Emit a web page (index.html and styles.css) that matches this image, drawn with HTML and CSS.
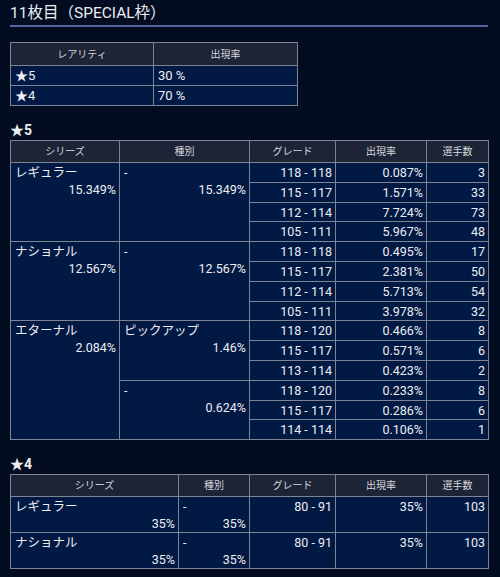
FILE: index.html
```html
<!DOCTYPE html>
<html lang="ja">
<head>
<meta charset="utf-8">
<link rel="stylesheet" href="styles.css">
</head>
<body>
<div class="page">
  <h2 class="title">11枚目（SPECIAL枠）</h2>

  <table class="tbl rarity">
    <colgroup><col class="c-r1"><col class="c-r2"></colgroup>
    <thead><tr><th>レアリティ</th><th>出現率</th></tr></thead>
    <tbody>
      <tr><td>★5</td><td>30 %</td></tr>
      <tr><td>★4</td><td>70 %</td></tr>
    </tbody>
  </table>

  <h3 class="rank">★5</h3>
  <table class="tbl detail">
    <colgroup><col class="c5-a"><col class="c5-b"><col class="c-g"><col class="c-p"><col class="c-n"></colgroup>
    <thead><tr><th>シリーズ</th><th>種別</th><th>グレード</th><th>出現率</th><th>選手数</th></tr></thead>
    <tbody>
      <tr>
        <td rowspan="4" class="grp"><div>レギュラー</div><div class="r">15.349%</div></td>
        <td rowspan="4" class="grp"><div>-</div><div class="r">15.349%</div></td>
        <td class="r">118 - 118</td><td class="r">0.087%</td><td class="r">3</td>
      </tr>
      <tr><td class="r">115 - 117</td><td class="r">1.571%</td><td class="r">33</td></tr>
      <tr><td class="r">112 - 114</td><td class="r">7.724%</td><td class="r">73</td></tr>
      <tr><td class="r">105 - 111</td><td class="r">5.967%</td><td class="r">48</td></tr>
      <tr>
        <td rowspan="4" class="grp"><div>ナショナル</div><div class="r">12.567%</div></td>
        <td rowspan="4" class="grp"><div>-</div><div class="r">12.567%</div></td>
        <td class="r">118 - 118</td><td class="r">0.495%</td><td class="r">17</td>
      </tr>
      <tr><td class="r">115 - 117</td><td class="r">2.381%</td><td class="r">50</td></tr>
      <tr><td class="r">112 - 114</td><td class="r">5.713%</td><td class="r">54</td></tr>
      <tr><td class="r">105 - 111</td><td class="r">3.978%</td><td class="r">32</td></tr>
      <tr>
        <td rowspan="6" class="grp"><div>エターナル</div><div class="r">2.084%</div></td>
        <td rowspan="3" class="grp"><div>ピックアップ</div><div class="r">1.46%</div></td>
        <td class="r">118 - 120</td><td class="r">0.466%</td><td class="r">8</td>
      </tr>
      <tr><td class="r">115 - 117</td><td class="r">0.571%</td><td class="r">6</td></tr>
      <tr><td class="r">113 - 114</td><td class="r">0.423%</td><td class="r">2</td></tr>
      <tr>
        <td rowspan="3" class="grp"><div>-</div><div class="r">0.624%</div></td>
        <td class="r">118 - 120</td><td class="r">0.233%</td><td class="r">8</td>
      </tr>
      <tr><td class="r">115 - 117</td><td class="r">0.286%</td><td class="r">6</td></tr>
      <tr><td class="r">114 - 114</td><td class="r">0.106%</td><td class="r">1</td></tr>
    </tbody>
  </table>

  <h3 class="rank">★4</h3>
  <table class="tbl detail">
    <colgroup><col class="c4-a"><col class="c4-b"><col class="c-g"><col class="c-p"><col class="c-n"></colgroup>
    <thead><tr><th>シリーズ</th><th>種別</th><th>グレード</th><th>出現率</th><th>選手数</th></tr></thead>
    <tbody>
      <tr>
        <td class="grp"><div>レギュラー</div><div class="r">35%</div></td>
        <td class="grp"><div>-</div><div class="r">35%</div></td>
        <td class="r">80 - 91</td><td class="r">35%</td><td class="r">103</td>
      </tr>
      <tr>
        <td class="grp"><div>ナショナル</div><div class="r">35%</div></td>
        <td class="grp"><div>-</div><div class="r">35%</div></td>
        <td class="r">80 - 91</td><td class="r">35%</td><td class="r">103</td>
      </tr>
    </tbody>
  </table>
</div>
</body>
</html>
```
FILE: styles.css
```css
html, body {
  margin: 0;
  padding: 0;
  background: #030c21;
  color: #eceef2;
  font-family: Roboto, "Noto Sans CJK JP", sans-serif;
}
.page {
  width: 478px;
  padding: 2px 0 0 10px;
}
.title {
  margin: 0 0 15px;
  font-size: 15.5px;
  font-weight: normal;
  line-height: 22px;
  padding-bottom: 1px;
  border-bottom: 2px solid #56659a;
}
.tbl {
  border-collapse: collapse;
  table-layout: fixed;
  font-size: 12.5px;
}
.tbl th, .tbl td {
  border: 1px solid #7d8595;
  padding: 1px 3px 0 4px;
  line-height: 17px;
  height: 19.8px;
  box-sizing: border-box;
  vertical-align: top;
  text-align: left;
  font-weight: normal;
}
.tbl th {
  background: #1d2436;
  color: #d6d9df;
  font-size: 10px;
  text-align: center;
  vertical-align: middle;
  height: 22px;
  padding: 0 3px;
}
.tbl td {
  background: #021944;
}
.tbl .r { text-align: right; }
.rarity { width: 287px; font-size: 13px; }
.rarity th { height: 23px; }
.rarity td { height: 20px; padding-top: 1px; }
.c-r1 { width: 143px; }
.c-r2 { width: 144px; }
.detail { width: 478px; }
.c5-a { width: 109px; }
.c5-b { width: 130px; }
.c4-a { width: 168px; }
.c4-b { width: 71px; }
.c-g { width: 86px; }
.c-p { width: 91px; }
.c-n { width: 62px; }
.rank {
  margin: 14px 0 0;
  font-size: 14px;
  font-weight: bold;
  line-height: 20px;
}
```
